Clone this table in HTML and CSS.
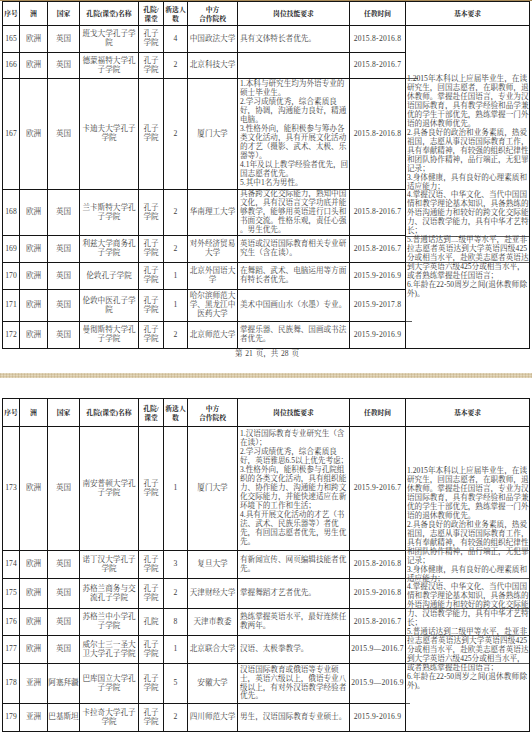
FILE: index.html
```html
<!DOCTYPE html>
<html lang="zh-CN">
<head>
<meta charset="utf-8">
<title>孔子学院志愿者岗位</title>
<link rel="stylesheet" href="styles.css">
</head>
<body>
<div class="topband"></div>

<section class="page">
<table class="sheet">
<colgroup>
<col class="w-no"><col class="w-zhou"><col class="w-guo"><col class="w-name"><col class="w-type"><col class="w-num"><col class="w-cn"><col class="w-skill"><col class="w-time"><col class="w-req">
</colgroup>
<thead>
<tr class="hd hd1">
<th>序号</th><th>洲</th><th>国家</th><th>孔院(课堂)名称</th><th>孔院/<br>课堂</th><th>新选人<br>数</th><th>中方<br>合作院校</th><th>岗位技能要求</th><th>任教时间</th><th>基本要求</th>
</tr>
</thead>
<tbody>
<tr class="r27">
<td class="c n">165</td><td class="c">欧洲</td><td class="c">英国</td><td class="c">班戈大学孔子学<br>院</td><td class="c">孔子<br>学院</td><td class="c n">4</td><td class="c">中国政法大学</td><td class="l"><span>具有文体特长者优先。</span></td><td class="t">2015.8-2016.8</td>
<td class="req req1" rowspan="8"><span class="jf">1.2015年本科以上应届毕业生，在读</span><span class="jf">研究生，回国志愿者，在职教师，退</span><span class="jf">休教师。掌握赴任国语言，专业为汉</span><span class="jf">语国际教育，具有教学经验和品学兼</span><span class="jf">优的学生干部优先，熟练掌握一门外</span><span>语的退休教师优先。</span><span class="jf">2.具备良好的政治和业务素质，热爱</span><span class="jf">祖国，志愿从事汉语国际教育工作，</span><span class="jf">具有奉献精神，有较强的组织纪律性</span><span class="jf">和团队协作精神，品行端正，无犯罪</span><span>记录；</span><span class="jf">3.身体健康，具有良好的心理素质和</span><span>适应能力；</span><span class="jf">4.掌握汉语、中华文化、当代中国国</span><span class="jf">情和教学理论基本知识，具备熟练的</span><span class="jf">外语沟通能力和较好的跨文化交际能</span><span class="jf">力、汉语教学能力，具有中华才艺特</span><span>长；</span><span class="jf">5.普通话达到二级甲等水平，赴亚非</span><span class="jf">拉志愿者英语达到大学英语四级425</span><span class="jf">分或相当水平，赴欧美志愿者英语达</span><span>到大学英语六级425分或相当水平，</span><span>或者熟练掌握赴任国语言；</span><span class="jf">6.年龄在22-50周岁之间(退休教师除</span><span>外)。</span></td>
</tr>
<tr class="r26">
<td class="c n">166</td><td class="c">欧洲</td><td class="c">英国</td><td class="c">德蒙福特大学孔<br>子学院</td><td class="c">孔子<br>学院</td><td class="c n">2</td><td class="c">北京科技大学</td><td class="l"></td><td class="t">2015.8-2016.7</td>
</tr>
<tr class="r111">
<td class="c n">167</td><td class="c">欧洲</td><td class="c">英国</td><td class="c">卡迪夫大学孔子<br>学院</td><td class="c">孔子<br>学院</td><td class="c n">2</td><td class="c">厦门大学</td><td class="l"><span class="jf">1.本科与研究生均为外语专业的</span><span>硕士毕业生。</span><span>2.学习成绩优秀，综合素质良</span><span class="jf">好，协调，沟通能力良好，精通</span><span>电脑。</span><span class="jf">3.性格外向，能积极参与筹办各</span><span class="jf">类文化活动，具有开展文化活动</span><span class="jf">的才艺（摄影、武术、太极、乐</span><span>器等）。</span><span class="jf">4.1年及以上教学经验者优先，回</span><span>国志愿者优先。</span><span>5.其中1名为男性。</span></td><td class="t">2015.8-2016.8</td>
</tr>
<tr class="r46">
<td class="c n">168</td><td class="c">欧洲</td><td class="c">英国</td><td class="c">兰卡斯特大学孔<br>子学院</td><td class="c">孔子<br>学院</td><td class="c n">2</td><td class="c">华南理工大学</td><td class="l"><span class="jf">具备跨文化交际能力，熟知中国</span><span class="jf">文化，具有汉语言文学功底并能</span><span class="jf">够教学，能够用英语进行口头和</span><span class="jf">书面交流。性格乐观，责任心强</span><span>。男生优先。</span></td><td class="t">2015.8-2016.7</td>
</tr>
<tr class="r27">
<td class="c n">169</td><td class="c">欧洲</td><td class="c">英国</td><td class="c">利兹大学商务孔<br>子学院</td><td class="c">孔子<br>学院</td><td class="c n">2</td><td class="c">对外经济贸易<br>大学</td><td class="l"><span class="jf">英语或汉语国际教育相关专业研</span><span>究生（含在读）。</span></td><td class="t">2015.8-2016.7</td>
</tr>
<tr class="r27">
<td class="c n">170</td><td class="c">欧洲</td><td class="c">英国</td><td class="c">伦敦孔子学院</td><td class="c">孔子<br>学院</td><td class="c n">1</td><td class="c">北京外国语大<br>学</td><td class="l"><span class="jf">在舞蹈、武术、电脑运用等方面</span><span>有特长者优先。</span></td><td class="t">2015.9-2016.9</td>
</tr>
<tr class="r32">
<td class="c n">171</td><td class="c">欧洲</td><td class="c">英国</td><td class="c">伦敦中医孔子学<br>院</td><td class="c">孔子<br>学院</td><td class="c n">1</td><td class="c">哈尔滨师范大<br>学、黑龙江中<br>医药大学</td><td class="l"><span>美术中国画山水（水墨）专业。</span></td><td class="t">2015.9-2017.8</td>
</tr>
<tr class="r27">
<td class="c n">172</td><td class="c">欧洲</td><td class="c">英国</td><td class="c">曼彻斯特大学孔<br>子学院</td><td class="c">孔子<br>学院</td><td class="c n">2</td><td class="c">北京师范大学</td><td class="l"><span class="jf">掌握乐器、民族舞、国画或书法</span><span>者优先。</span></td><td class="t">2015.9-2016.9</td>
</tr>
</tbody>
</table>
<p class="pageno">第 21 页，共 28 页</p>
</section>

<div class="gap"><div class="band"></div></div>

<section class="page">
<table class="sheet">
<colgroup>
<col class="w-no"><col class="w-zhou"><col class="w-guo"><col class="w-name"><col class="w-type"><col class="w-num"><col class="w-cn"><col class="w-skill"><col class="w-time"><col class="w-req">
</colgroup>
<thead>
<tr class="hd hd2">
<th>序号</th><th>洲</th><th>国家</th><th>孔院(课堂)名称</th><th>孔院/<br>课堂</th><th>新选人<br>数</th><th>中方<br>合作院校</th><th>岗位技能要求</th><th>任教时间</th><th>基本要求</th>
</tr>
</thead>
<tbody>
<tr class="r124">
<td class="c n">173</td><td class="c">欧洲</td><td class="c">英国</td><td class="c">南安普顿大学孔<br>子学院</td><td class="c">孔子<br>学院</td><td class="c n">1</td><td class="c">厦门大学</td><td class="l"><span class="jf">1.汉语国际教育专业研究生（含</span><span>在读）；</span><span>2.学习成绩优秀，综合素质良</span><span class="jf">好，英语雅思6.5以上优先考虑；</span><span class="jf">3.性格外向，能积极参与孔院组</span><span class="jf">织的各类文化活动，具有组织能</span><span class="jf">力、协作能力、沟通能力和跨文</span><span class="jf">化交际能力，并能快速适应在新</span><span>环境下的工作和生活；</span><span class="jf">4.具有开展文化活动的才艺（书</span><span>法、武术、民族乐器等）者优</span><span class="jf">先，有回国志愿者优先，男生优</span><span>先。</span></td><td class="t">2015.9-2016.7</td>
<td class="req req2" rowspan="7"><span class="jf">1.2015年本科以上应届毕业生，在读</span><span class="jf">研究生，回国志愿者，在职教师，退</span><span class="jf">休教师。掌握赴任国语言，专业为汉</span><span class="jf">语国际教育，具有教学经验和品学兼</span><span class="jf">优的学生干部优先，熟练掌握一门外</span><span>语的退休教师优先。</span><span class="jf">2.具备良好的政治和业务素质，热爱</span><span class="jf">祖国，志愿从事汉语国际教育工作，</span><span class="jf">具有奉献精神，有较强的组织纪律性</span><span class="jf">和团队协作精神，品行端正，无犯罪</span><span>记录；</span><span class="jf">3.身体健康，具有良好的心理素质和</span><span>适应能力；</span><span class="jf">4.掌握汉语、中华文化、当代中国国</span><span class="jf">情和教学理论基本知识，具备熟练的</span><span class="jf">外语沟通能力和较好的跨文化交际能</span><span class="jf">力、汉语教学能力，具有中华才艺特</span><span>长；</span><span class="jf">5.普通话达到二级甲等水平，赴亚非</span><span class="jf">拉志愿者英语达到大学英语四级425</span><span class="jf">分或相当水平，赴欧美志愿者英语达</span><span>到大学英语六级425分或相当水平，</span><span>或者熟练掌握赴任国语言；</span><span class="jf">6.年龄在22-50周岁之间(退休教师除</span><span>外)。</span></td>
</tr>
<tr class="r28">
<td class="c n">174</td><td class="c">欧洲</td><td class="c">英国</td><td class="c">诺丁汉大学孔子<br>学院</td><td class="c">孔子<br>学院</td><td class="c n">3</td><td class="c">复旦大学</td><td class="l"><span class="jf">有新闻宣传、网页编辑技能者优</span><span>先。</span></td><td class="t">2015.8-2016.8</td>
</tr>
<tr class="r30">
<td class="c n">175</td><td class="c">欧洲</td><td class="c">英国</td><td class="c">苏格兰商务与交<br>流孔子学院</td><td class="c">孔子<br>学院</td><td class="c n">2</td><td class="c">天津财经大学</td><td class="l"><span>掌握舞蹈才艺者优先。</span></td><td class="t">2015.9-2016.8</td>
</tr>
<tr class="r27">
<td class="c n">176</td><td class="c">欧洲</td><td class="c">英国</td><td class="c">苏格兰中小学孔<br>子学院</td><td class="c">孔院</td><td class="c n">8</td><td class="c">天津市教委</td><td class="l"><span class="jf">熟练掌握英语水平，最好连续任</span><span>教两年。</span></td><td class="t">2015.8-2016.7</td>
</tr>
<tr class="r28">
<td class="c n">177</td><td class="c">欧洲</td><td class="c">英国</td><td class="c">威尔士三一圣大<br>卫大学孔子学院</td><td class="c">孔子<br>学院</td><td class="c n">1</td><td class="c">北京联合大学</td><td class="l"><span>汉语、太极拳教学。</span></td><td class="t">2015.9—2016.7</td>
</tr>
<tr class="r40">
<td class="c n">178</td><td class="c">亚洲</td><td class="c">阿塞拜疆</td><td class="c">巴库国立大学孔<br>子学院</td><td class="c">孔子<br>学院</td><td class="c n">5</td><td class="c">安徽大学</td><td class="l"><span>汉语国际教育或俄语等专业硕</span><span class="jf">士，英语六级以上，俄语专业八</span><span class="jf">级以上，有对外汉语教学经验者</span><span>优先。</span></td><td class="t">2015.9—2016.9</td>
</tr>
<tr class="r28">
<td class="c n">179</td><td class="c">亚洲</td><td class="c">巴基斯坦</td><td class="c">卡拉奇大学孔子<br>学院</td><td class="c">孔子<br>学院</td><td class="c n">2</td><td class="c">四川师范大学</td><td class="l"><span>男生，汉语国际教育专业硕士。</span></td><td class="t">2015.9-2016.9</td>
</tr>
</tbody>
</table>
</section>
</body>
</html>
```
FILE: styles.css
```css
html, body {
  margin: 0;
  padding: 0;
  background: #ffffff;
}
body {
  width: 532px;
  font-family: "Liberation Serif", "Noto Serif CJK SC", "Noto Sans CJK SC", serif;
  color: #3c3c3c;
  overflow: hidden;
}
.topband {
  height: 1px;
  background: #a88a58;
}
.page {
  padding-left: 2px;
}
.sheet {
  border-collapse: collapse;
  table-layout: fixed;
  width: 527px;
  font-size: 7.6px;
  line-height: 8.95px;
}
.w-no { width: 17px; }
.w-zhou { width: 28px; }
.w-guo { width: 32px; }
.w-name { width: 59px; }
.w-type { width: 25px; }
.w-num { width: 24px; }
.w-cn { width: 50px; }
.w-skill { width: 112px; }
.w-time { width: 56px; }
.w-req { width: 124px; }

.sheet th, .sheet td {
  border: 1px solid #141414;
  padding: 0;
  vertical-align: middle;
  overflow: hidden;
}
.sheet th {
  font-size: 6.8px;
  line-height: 9px;
  font-weight: 700;
  color: #1e1e1e;
  text-align: center;
}
.hd1 th { height: 23px; }
.hd2 th { height: 27px; }

.c { text-align: center; white-space: nowrap; }
.t { text-align: center; white-space: nowrap; letter-spacing: 0.25px; }

.sheet td.l {
  text-align: left;
  padding: 0 7px 0 2px;
}
.sheet td.req {
  text-align: left;
  padding: 0 2px 0 1px;
  background-repeat: no-repeat;
}
.l span, .req span {
  display: block;
  white-space: nowrap;
}
.l .jf, .req .jf {
  text-align: justify;
  text-align-last: justify;
  text-justify: inter-character;
}

/* faint row rules showing through the merged column, as in the scan */
.req1 {
  background-image:
    linear-gradient(#5a5a5a, #5a5a5a),
    linear-gradient(#5a5a5a, #5a5a5a),
    linear-gradient(#5a5a5a, #5a5a5a),
    linear-gradient(#5a5a5a, #5a5a5a);
  background-size: 12px 1px, 100% 1px, 100% 1px, 6px 1px;
  background-position: 0 52px, 0 210px, 0 236px, 0 295px;
}
.req2 {
  background-image:
    linear-gradient(#5a5a5a, #5a5a5a),
    linear-gradient(#5a5a5a, #5a5a5a),
    linear-gradient(#5a5a5a, #5a5a5a),
    linear-gradient(#5a5a5a, #5a5a5a),
    linear-gradient(#5a5a5a, #5a5a5a),
    linear-gradient(#5a5a5a, #5a5a5a);
  background-size: 100% 1px, 100% 1px, 100% 1px, 100% 1px, 100% 1px, 4px 1px;
  background-position: 0 123px, 0 151px, 0 181px, 0 208px, 0 236px, 0 276px;
}

.r26 td { height: 25px; }
.r27 td { height: 26px; }
.r28 td { height: 27px; }
.r30 td { height: 29px; }
.r32 td { height: 31px; }
.r40 td { height: 39px; }
.r46 td { height: 45px; }
.r111 td { height: 110px; }
.r124 td { height: 123px; }

.pageno {
  margin: 0;
  height: 9px;
  line-height: 9px;
  font-size: 7.5px;
  text-align: center;
  color: #444;
  word-spacing: 1px;
}
.gap {
  padding-top: 15px;
  padding-bottom: 20px;
}
.band {
  height: 5px;
  background-color: #d9c9a6;
  background-image:
    repeating-linear-gradient(90deg, rgba(150,120,70,0.18) 0 1px, transparent 1px 3px),
    repeating-linear-gradient(0deg, rgba(255,255,255,0.25) 0 1px, transparent 1px 2px);
}
```
